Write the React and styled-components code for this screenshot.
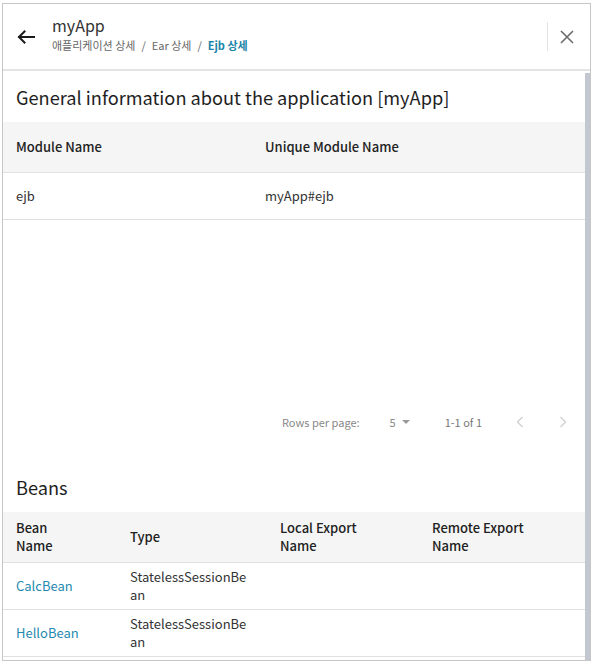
import React from 'react'
import styled, { createGlobalStyle } from 'styled-components'

const GlobalStyle = createGlobalStyle`
  html, body {
    margin: 0;
    padding: 0;
    background: #ffffff;
  }
  body {
    font-family: "Noto Sans CJK KR", "Noto Sans", sans-serif;
    color: #333333;
  }
`

const modules = [{ name: 'ejb', unique: 'myApp#ejb' }]

const beans = [
  { name: 'CalcBean', type: 'StatelessSessionBean', local: '', remote: '' },
  { name: 'HelloBean', type: 'StatelessSessionBean', local: '', remote: '' }
]

const beanCols = [
  { label: 'Bean Name', width: 114 },
  { label: 'Type', width: 150 },
  { label: 'Local Export Name', width: 152 },
  { label: 'Remote Export Name', width: 166 }
]

const BackIcon = () => (
  <svg width="18" height="14" viewBox="0 0 18 14" fill="none">
    <path d="M17 7H2M7.5 1.5L2 7l5.5 5.5" stroke="#1b1b1b" strokeWidth="2" strokeLinecap="square" />
  </svg>
)

const CloseIcon = () => (
  <svg width="14" height="14" viewBox="0 0 14 14" fill="none">
    <path d="M1 1l12 12M13 1L1 13" stroke="#6b6b6b" strokeWidth="1.6" />
  </svg>
)

const ChevronIcon = ({ dir }) => (
  <svg width="8" height="12" viewBox="0 0 8 12" fill="none">
    <path d={dir === 'left' ? 'M6.5 1L1.5 6l5 5' : 'M1.5 1l5 5-5 5'} stroke="#cfcfcf" strokeWidth="1.3" />
  </svg>
)

const App = () => (
  <>
    <GlobalStyle />
    <Frame>
      <Header>
        <IconButton aria-label="back">
          <BackIcon />
        </IconButton>
        <TitleBox>
          <AppTitle>myApp</AppTitle>
          <Crumbs>
            <Crumb>애플리케이션 상세</Crumb>
            <CrumbSep>/</CrumbSep>
            <Crumb>Ear 상세</Crumb>
            <CrumbSep>/</CrumbSep>
            <Crumb active>Ejb 상세</Crumb>
          </Crumbs>
        </TitleBox>
        <Divider />
        <IconButton aria-label="close">
          <CloseIcon />
        </IconButton>
      </Header>

      <Body>
        <Content>
          <SectionTitle>General information about the application [myApp]</SectionTitle>
          <Table>
            <HeadRow>
              <HeadCell width={249}>Module Name</HeadCell>
              <HeadCell>Unique Module Name</HeadCell>
            </HeadRow>
            {modules.map(m => (
              <Row key={m.name}>
                <Cell width={249}>{m.name}</Cell>
                <Cell>{m.unique}</Cell>
              </Row>
            ))}
            <EmptyFill />
          </Table>
          <Pagination>
            <PageLabel>Rows per page:</PageLabel>
            <PageSelect>
              5
              <Caret />
            </PageSelect>
            <PageRange>1-1 of 1</PageRange>
            <PageNav>
              <ChevronIcon dir="left" />
              <ChevronIcon dir="right" />
            </PageNav>
          </Pagination>

          <SectionTitle spaced>Beans</SectionTitle>
          <Table>
            <HeadRow>
              {beanCols.map(c => (
                <HeadCell key={c.label} width={c.width} narrow>
                  {c.label}
                </HeadCell>
              ))}
            </HeadRow>
            {beans.map(b => (
              <Row key={b.name}>
                <Cell width={114}>
                  <Link>{b.name}</Link>
                </Cell>
                <Cell width={150} wrap>
                  {b.type}
                </Cell>
                <Cell width={152}>{b.local}</Cell>
                <Cell width={166}>{b.remote}</Cell>
              </Row>
            ))}
          </Table>
        </Content>
        <ScrollTrack>
          <ScrollThumb />
        </ScrollTrack>
      </Body>
    </Frame>
  </>
)

const Frame = styled.div`
  margin: 3px 0 0 2px;
  width: 589px;
  height: 658px;
  box-sizing: border-box;
  border: 1px solid #c6c6c6;
  display: flex;
  flex-direction: column;
  overflow: hidden;
  background: #fff;
`

const Header = styled.div`
  height: 65px;
  flex-shrink: 0;
  display: flex;
  align-items: center;
  padding: 0 13px 0 13px;
  border-bottom: 2px solid #e4e4e4;
`

const IconButton = styled.button`
  border: 0;
  background: none;
  padding: 0;
  display: flex;
  align-items: center;
  justify-content: center;
  width: 20px;
  height: 20px;
  cursor: pointer;
`

const TitleBox = styled.div`
  display: flex;
  flex-direction: column;
  margin-left: 16px;
  padding-bottom: 6px;
  flex: 1;
`

const AppTitle = styled.div`
  font-size: 16px;
  line-height: 20px;
  color: #333;
`

const Crumbs = styled.div`
  display: flex;
  align-items: center;
  margin-top: 3px;
  font-size: 11px;
  line-height: 14px;
`

const Crumb = styled.span`
  color: ${p => (p.active ? '#1a85a8' : '#666')};
  font-weight: ${p => (p.active ? 700 : 400)};
`

const CrumbSep = styled.span`
  color: #666;
  margin: 0 6px;
`

const Divider = styled.div`
  width: 1px;
  height: 29px;
  background: #e2e2e2;
  margin-right: 9px;
`

const Body = styled.div`
  flex: 1;
  min-height: 0;
  display: flex;
`

const Content = styled.div`
  flex: 1;
  min-width: 0;
  overflow: hidden;
`

const ScrollTrack = styled.div`
  width: 5px;
  flex-shrink: 0;
  padding-top: 2px;
  display: flex;
  flex-direction: column;
`

const ScrollThumb = styled.div`
  flex: 1;
  background: #c3c8d0;
`

const SectionTitle = styled.h2`
  margin: ${p => (p.spaced ? '13px' : '0')} 0 0;
  height: 51px;
  display: flex;
  align-items: center;
  padding-left: 13px;
  font-size: 18.2px;
  font-weight: 400;
  color: #1e1e1e;
`

const Table = styled.div`
  display: flex;
  flex-direction: column;
`

const HeadRow = styled.div`
  display: flex;
  min-height: 50px;
  background: #f5f5f5;
  border-bottom: 1px solid #e0e0e0;
`

const Row = styled.div`
  display: flex;
  min-height: 46px;
  border-bottom: 1px solid #e0e0e0;
`

const HeadCell = styled.div`
  box-sizing: border-box;
  width: ${p => (p.width ? `${p.width}px` : 'auto')};
  flex: ${p => (p.width ? 'none' : '1')};
  display: flex;
  align-items: center;
  padding: 0 ${p => (p.narrow ? '46px' : '16px')} 0 13px;
  font-size: 13px;
  line-height: 18px;
  font-weight: 500;
  color: #222;
`

const Cell = styled.div`
  box-sizing: border-box;
  width: ${p => (p.width ? `${p.width}px` : 'auto')};
  flex: ${p => (p.width ? 'none' : '1')};
  display: flex;
  align-items: center;
  padding: 0 16px 0 13px;
  font-size: 13px;
  line-height: 18px;
  color: #333;
  word-break: ${p => (p.wrap ? 'break-all' : 'normal')};
`

const Link = styled.span`
  color: #1f8ab0;
  font-size: 13px;
`

const EmptyFill = styled.div`
  height: 176px;
`

const Pagination = styled.div`
  height: 52px;
  display: flex;
  align-items: center;
  justify-content: flex-end;
  padding-right: 18px;
  font-size: 11px;
  color: #888;
`

const PageLabel = styled.span`
  margin-right: 30px;
`

const PageSelect = styled.span`
  display: flex;
  align-items: center;
  gap: 6px;
  margin-right: 35px;
`

const Caret = styled.span`
  width: 0;
  height: 0;
  border-left: 4px solid transparent;
  border-right: 4px solid transparent;
  border-top: 4px solid #999;
`

const PageRange = styled.span`
  color: #777;
  margin-right: 34px;
`

const PageNav = styled.div`
  display: flex;
  align-items: center;
  gap: 35px;
`

export default App
